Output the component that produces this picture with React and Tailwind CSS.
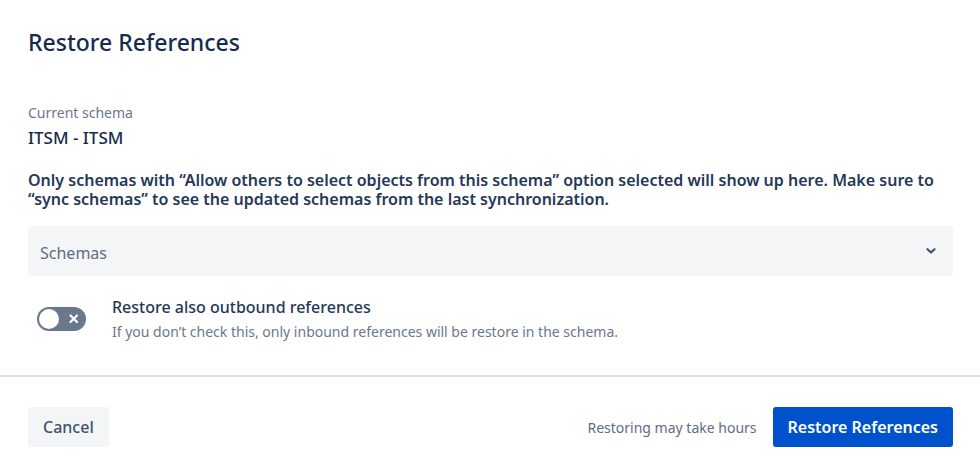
import React from "react";

export default function App() {
  return (
    <div className="w-[980px] h-[474px] bg-white flex flex-col text-[#172B4D]" style={{ fontFamily: '"Noto Sans", "Open Sans", sans-serif' }}>
      <div className="px-7 pt-[27px]">
        <h1 className="text-[23px] leading-[30px] font-medium text-[#172B4D]">Restore References</h1>
      </div>
      <div className="pl-7 pr-[27px] pt-[46px] flex flex-col">
        <div className="text-[14px] leading-[20px] text-[#6B778C]">Current schema</div>
        <div className="text-[17px] leading-[24px] font-medium mt-[3px]">ITSM - ITSM</div>
        <p className="text-[16px] leading-[19px] font-semibold mt-[21px] text-[#253858]">
          Only schemas with “Allow others to select objects from this schema” option selected will show up here. Make sure to “sync schemas” to see the updated schemas from the last synchronization.
        </p>
        <div className="mt-[17px] h-[50px] rounded-[4px] bg-[#F4F5F7] flex items-center justify-between pl-3 pr-4">
          <span className="text-[16px] text-[#5E6C84] pt-[3px]">Schemas</span>
          <svg width="12" height="12" viewBox="0 0 12 12">
            <path d="M2.5 4.2 L6 7.5 L9.5 4.2" fill="none" stroke="#42526E" strokeWidth="2.2" strokeLinecap="round" strokeLinejoin="round" />
          </svg>
        </div>
        <div className="mt-[19px] flex items-start">
          <div className="w-[84px] shrink-0 flex pl-[9px] pt-[12px]">
            <div className="w-[49px] h-[24px] rounded-full bg-[#6B778C] flex items-center justify-between px-[2px]">
              <div className="w-[20px] h-[20px] rounded-full bg-white" />
              <svg width="20" height="20" viewBox="0 0 20 20">
                <path d="M6.5 6.5 L13 13 M13 6.5 L6.5 13" stroke="white" strokeWidth="2.2" strokeLinecap="round" />
              </svg>
            </div>
          </div>
          <div className="flex flex-col">
            <div className="text-[16px] leading-[24px] font-medium text-[#253858]">Restore also outbound references</div>
            <div className="text-[14px] leading-[24px] text-[#6B778C] mt-[1px]">If you don’t check this, only inbound references will be restore in the schema.</div>
          </div>
        </div>
      </div>
      <div className="mt-[31px] h-[2px] bg-[#DFE1E6]" />
      <div className="pl-7 pr-[27px] pt-[30px] flex items-center justify-between">
        <button className="h-[40px] px-[15px] rounded-[3px] bg-[#F4F5F7] text-[16px] font-medium text-[#42526E]">Cancel</button>
        <div className="flex items-center gap-4">
          <span className="text-[14px] text-[#5E6C84]">Restoring may take hours</span>
          <button className="h-[40px] px-[15px] rounded-[3px] bg-[#0052CC] text-[16px] font-semibold text-white">Restore References</button>
        </div>
      </div>
    </div>
  );
}
